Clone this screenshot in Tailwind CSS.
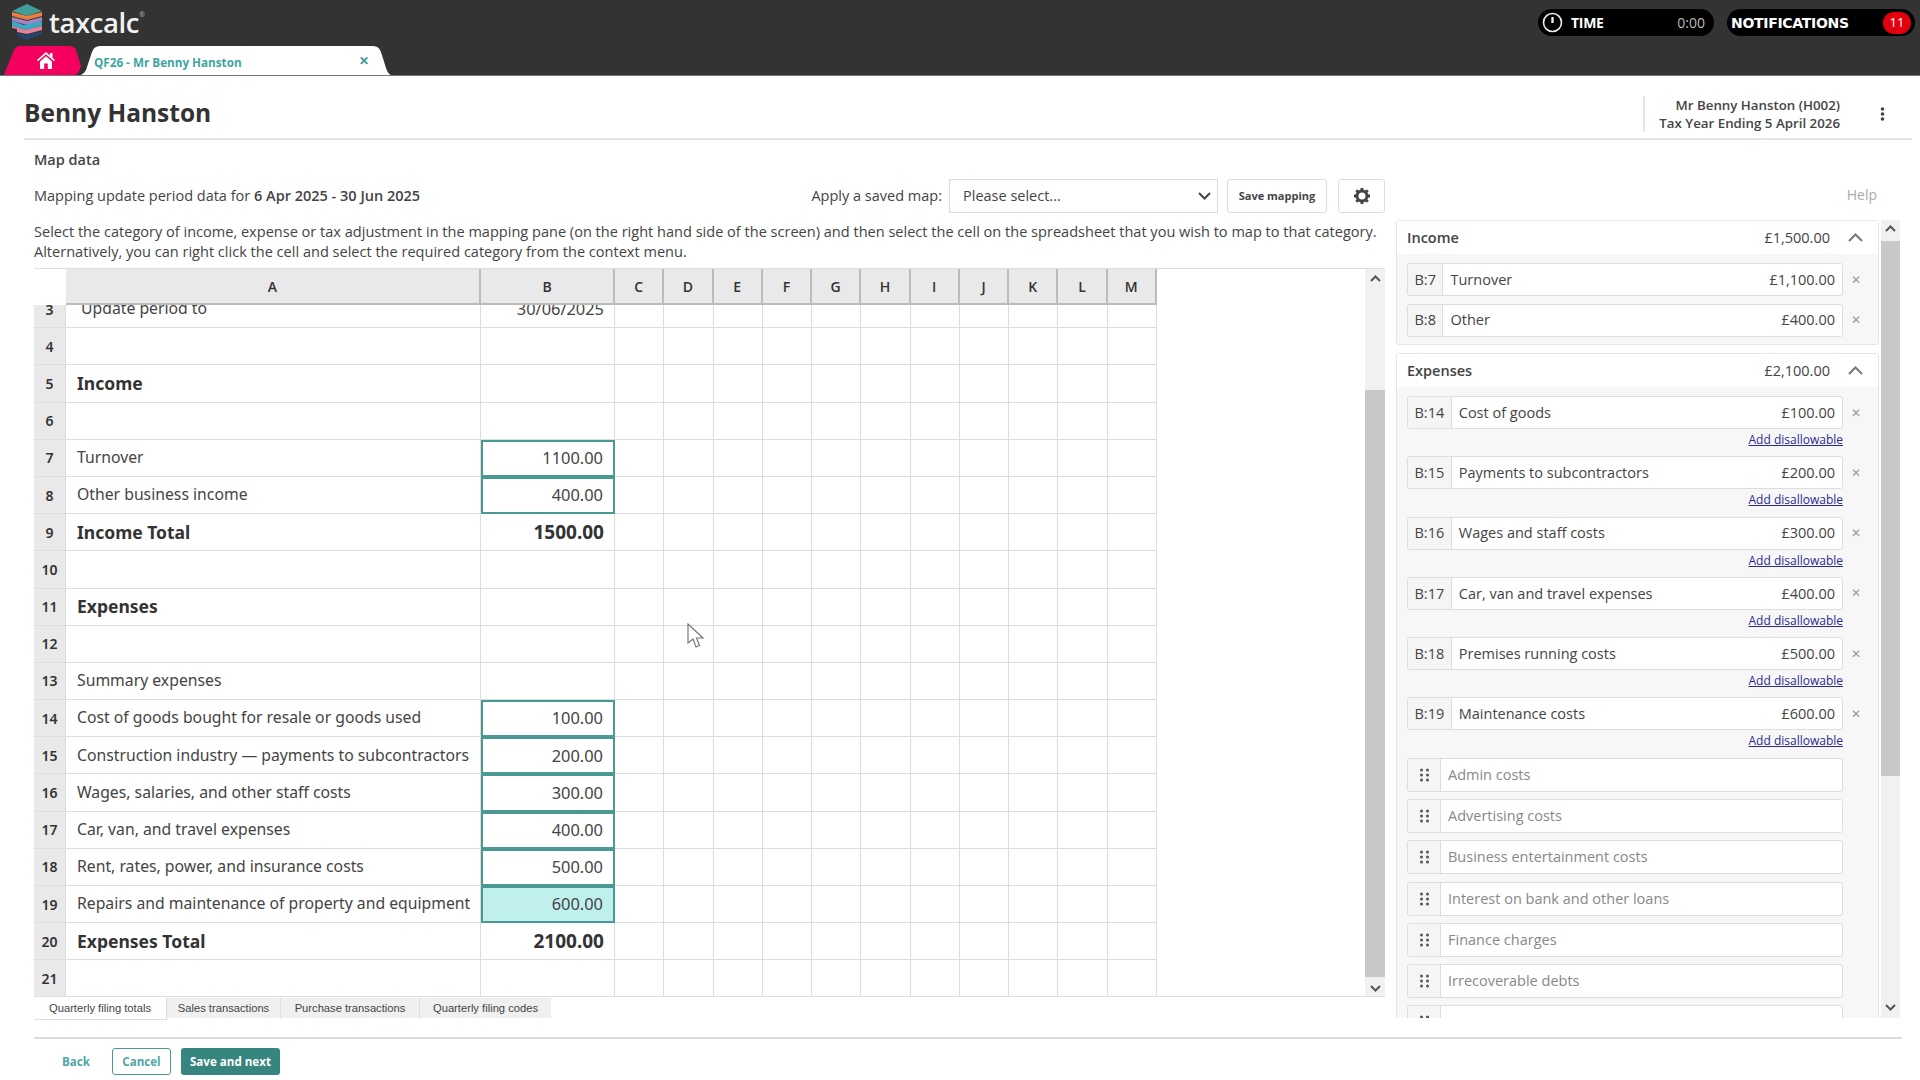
<!DOCTYPE html>
<html lang="en">
<head>
  <meta charset="UTF-8" />
  <title>TaxCalc - Map data</title>
  <script src="https://cdn.jsdelivr.net/npm/@tailwindcss/browser@4"></script>
</head>
<body class="relative w-[1920px] h-[1080px] overflow-hidden bg-white font-['Open_Sans',sans-serif] text-[#444]">

  <!-- Top bar -->
  <header class="h-[76px] bg-[#333] flex flex-col border-b border-[#777]">
    <div class="h-[46px] flex items-start justify-between">
      <div class="flex items-start pl-[12px] pt-[4px]">
        <svg width="31" height="36" viewBox="0 0 31 36">
          <polygon points="15,0 30,7 15,12 0,7" fill="#3f9d9a"/>
          <polygon points="0,8 15,12 30,8 30,12 15,16 0,12" fill="#e9803f"/>
          <polygon points="0,13 15,17 30,13 30,17 15,21 0,17" fill="#a582c2"/>
          <polygon points="0,17 12,21 30,17 30,22 14,26 0,22" fill="#39a9c4"/>
          <polygon points="0,22 14,26 30,22 30,26 15,30 5,28 5,25 0,24" fill="#ea7f9a"/>
          <polygon points="5,29 15,31 30,27 30,30 15,36 5,32" fill="#22466f"/>
        </svg>
        <span class="ml-[6px] text-[27.5px] leading-[38px] font-semibold text-[#f2f2f2] tracking-[-0.4px]">taxcalc</span>
        <span class="mt-[6px] text-[7px] text-[#bbb]">®</span>
      </div>
      <div class="flex items-center gap-[13px] pt-[9px] pr-[5px]">
        <div class="w-[176px] h-[27px] rounded-full bg-black flex items-center pl-[4px] pr-[9px] text-white">
          <svg width="21" height="21" viewBox="0 0 21 21" fill="none" stroke="#eee" stroke-width="1.6"><circle cx="10.5" cy="10.5" r="9"/><path d="M10.5 5v6" stroke-width="2.4"/></svg>
          <span class="ml-[8px] text-[14px] font-bold tracking-[-0.3px]">TIME</span>
          <span class="ml-auto text-[14px] text-[#bbb]">0:00</span>
        </div>
        <div class="w-[188px] h-[27px] rounded-full bg-black flex items-center pl-[4px] pr-[4px]">
          <span class="text-[14px] font-bold font-['DejaVu_Sans',sans-serif] text-white tracking-[-0.3px] pt-[1px]">NOTIFICATIONS</span>
          <span class="ml-auto w-[28px] h-[22px] rounded-full bg-[#e2000f] text-white text-[13px] flex items-center justify-center">11</span>
        </div>
      </div>
    </div>
    <div class="h-[29px] flex items-stretch pl-[4px]">
      <div class="relative w-[77px] flex items-center justify-center">
        <svg class="absolute inset-0" width="77" height="29" viewBox="0 0 77 29"><path d="M0 29 L10 4 Q12 0 16 0 H65 Q70 0 72 4 L77 20 Q74 29 71 29 Z" fill="#f5005f"/></svg>
        <svg class="relative ml-[6px]" width="18" height="17" viewBox="0 0 18 17" fill="#fff"><path d="M9 0 L13 3.5 V1 H15.5 V5.8 L18 8 L17 9.3 L9 2.3 L1 9.3 L0 8 Z M3 9.6 L9 4.3 L15 9.6 V17 H10.8 V11.5 H7.2 V17 H3 Z"/></svg>
      </div>
      <div class="relative w-[310px] flex items-center">
        <svg class="absolute inset-0" width="310" height="29" viewBox="0 0 310 29"><path d="M0 29 Q3 28 5 24 L11 6 Q13 0 19 0 H292 Q298 0 300 6 L305 22 Q307 28 310 29 Z" fill="#fff"/></svg>
        <span class="relative ml-[13px] pt-[4px] text-[11.7px] font-bold text-[#3ea5a2]">QF26 - Mr Benny Hanston</span>
        <span class="absolute left-[278px] top-[6px] text-[12px] font-bold text-[#3a9a98]">✕</span>
      </div>
    </div>
  </header>

  <!-- Client heading -->
  <div class="ml-[24px] mr-[8px] h-[64px] pt-[13px] flex items-center justify-between border-b-2 border-[#e4e4e4]">
    <h1 class="text-[24.5px] font-bold text-[#333]">Benny Hanston</h1>
    <div class="flex items-center">
      <div class="border-l-2 border-[#e4e4e4] pl-[8px] w-[197px] text-right text-[13.3px] leading-[18px] font-semibold text-[#444]">
        <div>Mr Benny Hanston (H002)</div>
        <div>Tax Year Ending 5 April 2026</div>
      </div>
      <svg class="ml-[40px] mr-[27px]" width="5" height="14" viewBox="0 0 5 14" fill="#444"><circle cx="2.5" cy="2" r="1.8"/><circle cx="2.5" cy="7" r="1.8"/><circle cx="2.5" cy="12" r="1.8"/></svg>
    </div>
  </div>

  <div class="flex pl-[34px]">
    <!-- Left: spreadsheet -->
    <div class="w-[1351px]">
      <div class="h-[39px] pt-[9px] text-[14.5px] leading-[22px] font-semibold text-[#444]">Map data</div>
      <div class="h-[34px] flex items-center text-[14.5px]">
        <span>Mapping update period data for <b class="font-semibold">6 Apr 2025 - 30 Jun 2025</b></span>
        <span class="ml-auto">Apply a saved map:</span>
        <div class="ml-[7px] w-[269px] h-[34px] border border-[#ddd] flex items-center justify-between pl-[13px] pr-[6px]">
          <span>Please select...</span>
          <svg width="13" height="8" viewBox="0 0 13 8" fill="none" stroke="#444" stroke-width="2"><path d="M1 1 L6.5 6.5 L12 1"/></svg>
        </div>
        <div class="ml-[9px] w-[100px] h-[34px] border border-[#ddd] rounded-[3px] flex items-center justify-center text-[11px] font-bold">Save mapping</div>
        <div class="ml-[11px] w-[47px] h-[34px] border border-[#ddd] rounded-[3px] flex items-center justify-center">
          <svg width="16" height="16" viewBox="0 0 16 16" fill="#444">
            <circle cx="8" cy="8" r="5" fill="none" stroke="#444" stroke-width="3"/>
            <g stroke="#444" stroke-width="3"><path d="M8 0v3M8 13v3M0 8h3M13 8h3M2.3 2.3l2 2M11.7 11.7l2 2M2.3 13.7l2-2M11.7 4.3l2-2"/></g>
          </svg>
        </div>
      </div>
      <p class="pt-[9px] h-[55px] text-[14.55px] leading-[19.5px] whitespace-nowrap">Select the category of income, expense or tax adjustment in the mapping pane (on the right hand side of the screen) and then select the cell on the spreadsheet that you wish to map to that category.<br>Alternatively, you can right click the cell and select the required category from the context menu.</p>

      <div class="h-[729px] flex border-t border-b border-[#ddd]">
        <div class="w-[1332px] overflow-hidden">
          <div class="grid grid-cols-[32px_415px_134px_repeat(11,49.27px)] h-[36px] text-[14px] font-semibold text-[#333]">
            <div class="bg-white"></div>
            <div class="bg-[#e9e9e9] border-b-2 border-r-2 border-[#bbb] flex items-center justify-center">A</div>
            <div class="bg-[#e9e9e9] border-b-2 border-r-2 border-[#bbb] flex items-center justify-center">B</div>
            <div class="bg-[#e9e9e9] border-b-2 border-r-2 border-[#bbb] flex items-center justify-center">C</div>
            <div class="bg-[#e9e9e9] border-b-2 border-r-2 border-[#bbb] flex items-center justify-center">D</div>
            <div class="bg-[#e9e9e9] border-b-2 border-r-2 border-[#bbb] flex items-center justify-center">E</div>
            <div class="bg-[#e9e9e9] border-b-2 border-r-2 border-[#bbb] flex items-center justify-center">F</div>
            <div class="bg-[#e9e9e9] border-b-2 border-r-2 border-[#bbb] flex items-center justify-center">G</div>
            <div class="bg-[#e9e9e9] border-b-2 border-r-2 border-[#bbb] flex items-center justify-center">H</div>
            <div class="bg-[#e9e9e9] border-b-2 border-r-2 border-[#bbb] flex items-center justify-center">I</div>
            <div class="bg-[#e9e9e9] border-b-2 border-r-2 border-[#bbb] flex items-center justify-center">J</div>
            <div class="bg-[#e9e9e9] border-b-2 border-r-2 border-[#bbb] flex items-center justify-center">K</div>
            <div class="bg-[#e9e9e9] border-b-2 border-r-2 border-[#bbb] flex items-center justify-center">L</div>
            <div class="bg-[#e9e9e9] border-b-2 border-r-2 border-[#bbb] flex items-center justify-center">M</div>
          </div>
          <div class="h-[692px] overflow-hidden">
            <div id="rows" class="-mt-[14px]"></div>
          </div>
        </div>
        <div class="w-[20px] ml-[-1px] bg-[#f1f1f1] flex flex-col items-center pt-[6px]">
          <svg width="11" height="7" viewBox="0 0 11 7" fill="none" stroke="#555" stroke-width="2"><path d="M1 6 L5.5 1.5 L10 6"/></svg>
          <div class="mt-[108px] w-full h-[587px] bg-[#c8c8c8]"></div>
          <svg class="mt-[8px]" width="11" height="7" viewBox="0 0 11 7" fill="none" stroke="#555" stroke-width="2"><path d="M1 1 L5.5 5.5 L10 1"/></svg>
        </div>
      </div>

      <!-- Sheet tabs -->
      <div class="flex text-[11.2px] h-[23px] pt-[1px] font-['Liberation_Sans',sans-serif]">
        <div class="w-[133px] bg-white border-r border-b border-[#ddd] flex items-center justify-center">Quarterly filing totals</div>
        <div class="w-[114px] bg-[#f0f0f0] h-[20px] border-r border-[#ddd] flex items-center justify-center">Sales transactions</div>
        <div class="w-[139px] bg-[#f0f0f0] h-[20px] border-r border-[#ddd] flex items-center justify-center">Purchase transactions</div>
        <div class="w-[131px] bg-[#f0f0f0] h-[20px] flex items-center justify-center">Quarterly filing codes</div>
      </div>
    </div>

    <!-- Right: mapping pane -->
    <div class="ml-[11px] w-[505px]">
      <div class="h-[80px] pt-[44px] pr-[24px] text-right text-[14px] text-[#aaa]">Help</div>
      <div class="flex h-[798px]">
        <div id="pane" class="w-[483px] overflow-hidden"></div>
        <div class="ml-[2px] w-[19px] bg-[#f1f1f1] flex flex-col items-center pt-[5px]">
          <svg width="11" height="7" viewBox="0 0 11 7" fill="none" stroke="#555" stroke-width="2"><path d="M1 6 L5.5 1.5 L10 6"/></svg>
          <div class="mt-[9px] w-full h-[535px] bg-[#c8c8c8]"></div>
          <svg class="mt-[228px]" width="11" height="7" viewBox="0 0 11 7" fill="none" stroke="#555" stroke-width="2"><path d="M1 1 L5.5 5.5 L10 1"/></svg>
        </div>
      </div>
    </div>
  </div>

  <!-- Footer actions -->
  <div class="ml-[34px] mr-[18px] mt-[17px] border-t-2 border-[#ddd] pt-[9px] flex items-center text-[11.6px] font-bold">
    <span class="ml-[28px] text-[#4fa8a5]">Back</span>
    <span class="ml-[22px] w-[59px] h-[27px] border border-[#4a9a94] rounded-[3px] flex items-center justify-center text-[#4fa8a5]">Cancel</span>
    <span class="ml-[10px] w-[99px] h-[27px] bg-[#37857f] rounded-[3px] flex items-center justify-center text-white">Save and next</span>
  </div>

  <!-- Mouse pointer -->
  <svg class="absolute left-[687px] top-[623px]" width="20" height="26" viewBox="0 0 20 26" fill="#fff" stroke="#777" stroke-width="1.2"><path d="M1 1 V20 L6 16 L9 24 L12.5 22.5 L9.5 15 L16 15 Z"/></svg>

  <script>
    // spreadsheet rows: [row no, label, value, bold, mapped]
    const rows = [
      [3, '<span class="pl-[4px]">Update period to</span>', '30/06/2025'],
      [4, '', ''],
      [5, 'Income', '', true],
      [6, '', ''],
      [7, 'Turnover', '1100.00', false, 1],
      [8, 'Other business income', '400.00', false, 1],
      [9, 'Income Total', '1500.00', true],
      [10, '', ''],
      [11, 'Expenses', '', true],
      [12, '', ''],
      [13, 'Summary expenses', ''],
      [14, 'Cost of goods bought for resale or goods used', '100.00', false, 1],
      [15, 'Construction industry — payments to subcontractors', '200.00', false, 1],
      [16, 'Wages, salaries, and other staff costs', '300.00', false, 1],
      [17, 'Car, van, and travel expenses', '400.00', false, 1],
      [18, 'Rent, rates, power, and insurance costs', '500.00', false, 1],
      [19, 'Repairs and maintenance of property and equipment', '600.00', false, 2],
      [20, 'Expenses Total', '2100.00', true],
      [21, '', '']
    ];
    const blank = '<div class="border-r border-b border-[#ddd]"></div>'.repeat(11);
    document.getElementById('rows').innerHTML = rows.map(([n, label, value, bold, mapped]) => {
      const labelFont = bold ? 'font-bold text-[17.5px] text-[#333]' : 'text-[15.75px]';
      const valueFont = bold ? 'font-bold text-[19px] text-[#333]' : 'text-[16.4px]';
      let valueCell = 'border-r border-b border-[#ddd]';
      if (mapped === 1) valueCell = 'border-2 border-[#4a9a94]';
      if (mapped === 2) valueCell = 'border-2 border-[#4a9a94] bg-[#bff0ee]';
      return `<div class="grid grid-cols-[32px_415px_134px_repeat(11,49.27px)] h-[37.2px] font-['Noto_Sans',sans-serif]">
        <div class="bg-[#e9e9e9] border-r border-b border-[#ddd] flex items-center justify-center text-[14px] font-semibold text-[#333]">${n}</div>
        <div class="border-r border-b border-[#ddd] flex items-center pl-[11px] whitespace-nowrap ${labelFont}">${label}</div>
        <div class="${valueCell} flex items-center justify-end pr-[10px] ${valueFont}">${value}</div>
        ${blank}
      </div>`;
    }).join('');

    // mapping pane
    const mappedRow = (cell, name, amount, disallow) => `
      <div class="flex items-center">
        <div class="w-[436px] h-[33px] bg-white border border-[#ddd] rounded-[3px] flex items-center text-[14.5px]">
          <span class="h-full px-[6.5px] bg-[#f5f5f5] border-r border-[#ddd] flex items-center">${cell}</span>
          <span class="pl-[7px]">${name}</span>
          <span class="ml-auto pr-[7px]">${amount}</span>
        </div>
        <span class="ml-[8px] text-[12px] text-[#999]">✕</span>
      </div>
      ${disallow ? '<div class="w-[436px] h-[27.3px] text-right text-[12px] leading-[22px] text-[#2a2a90] underline">Add disallowable</div>' : '<div class="h-[7.5px]"></div>'}`;
    const dragRow = name => `
      <div class="w-[436px] h-[34px] mb-[7.25px] bg-white border border-[#ddd] rounded-[3px] flex items-center text-[14.5px] text-[#888]">
        <span class="w-[33px] h-full bg-[#f5f5f5] border-r border-[#ddd] flex items-center justify-center">
          <svg width="9" height="14" viewBox="0 0 9 14" fill="#555"><circle cx="1.5" cy="2" r="1.5"/><circle cx="7.5" cy="2" r="1.5"/><circle cx="1.5" cy="7" r="1.5"/><circle cx="7.5" cy="7" r="1.5"/><circle cx="1.5" cy="12" r="1.5"/><circle cx="7.5" cy="12" r="1.5"/></svg>
        </span>
        <span class="pl-[7px]">${name}</span>
      </div>`;
    const card = (title, total, body) => `
      <div class="border border-[#e5e5e5] rounded-[3px] mb-[8px]">
        <div class="h-[33px] bg-white flex items-center pl-[10px] pr-[15px] text-[14.5px]">
          <span class="font-semibold">${title}</span>
          <span class="ml-auto">${total}</span>
          <svg class="ml-[18px]" width="15" height="9" viewBox="0 0 15 9" fill="none" stroke="#777" stroke-width="2"><path d="M1 8 L7.5 1.5 L14 8"/></svg>
        </div>
        <div class="bg-[#f7f7f7] px-[10px] pt-[9px]">${body}</div>
      </div>`;
    document.getElementById('pane').innerHTML =
      card('Income', '£1,500.00',
        mappedRow('B:7', 'Turnover', '£1,100.00') + mappedRow('B:8', 'Other', '£400.00')) +
      card('Expenses', '£2,100.00',
        mappedRow('B:14', 'Cost of goods', '£100.00', true) +
        mappedRow('B:15', 'Payments to subcontractors', '£200.00', true) +
        mappedRow('B:16', 'Wages and staff costs', '£300.00', true) +
        mappedRow('B:17', 'Car, van and travel expenses', '£400.00', true) +
        mappedRow('B:18', 'Premises running costs', '£500.00', true) +
        mappedRow('B:19', 'Maintenance costs', '£600.00', true) +
        ['Admin costs', 'Advertising costs', 'Business entertainment costs', 'Interest on bank and other loans', 'Finance charges', 'Irrecoverable debts', ''].map(dragRow).join(''));
  </script>
</body>
</html>
